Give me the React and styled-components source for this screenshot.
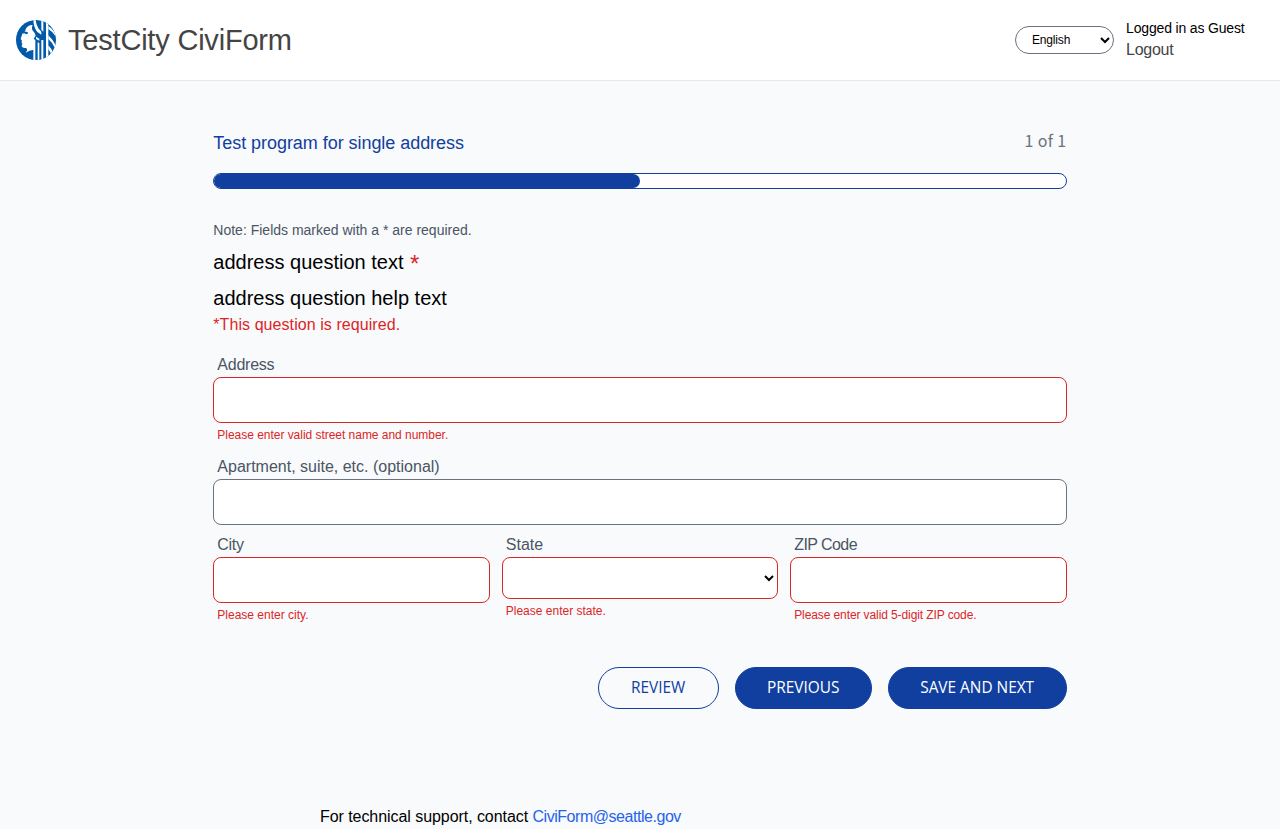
import React from 'react';
import styled, { createGlobalStyle, css } from 'styled-components';

const blue = '#113f9f';
const red = '#dc2626';

const GlobalStyle = createGlobalStyle`
  *, *::before, *::after { box-sizing: border-box; }
  body {
    margin: 0;
    background: #f8fafc;
    color: #000;
    font: 16px/24px "Liberation Sans", sans-serif;
  }
  h1, h2, p { margin: 0; font-weight: 400; }
  a { text-decoration: none; }
`;

const Page = styled.div`
  height: 829px;
  overflow: hidden;
`;

const Header = styled.header`
  display: flex;
  align-items: center;
  height: 81px;
  padding: 0 16px;
  background: #fff;
  border-bottom: 1px solid #e5e7eb;
`;

const Brand = styled.a`
  display: flex;
  align-items: center;
  gap: 12px;
`;

const BrandName = styled.span`
  font-size: 29px;
  line-height: 36px;
  letter-spacing: -0.2px;
  color: #444;
`;

const Logo = styled.svg`
  display: block;
  width: 40px;
  height: 40px;
`;

const LanguageSelect = styled.select`
  width: 99px;
  height: 28px;
  margin-left: auto;
  padding: 0 0 0 12px;
  border: 1px solid #6b7280;
  border-radius: 14px;
  background: #fff;
  color: #000;
  font: 12px/16px "Liberation Sans", sans-serif;
  letter-spacing: -0.17px;
`;

const Account = styled.div`
  display: flex;
  flex-direction: column;
  width: 150px;
  padding-left: 12px;
  padding-bottom: 1px;
  white-space: nowrap;
`;

const UserName = styled.span`
  font-size: 14px;
  line-height: 20px;
  letter-spacing: -0.16px;
`;

const Logout = styled.a`
  letter-spacing: -0.25px;
  color: #444;
`;

const Main = styled.main`
  width: 66.6667%;
  margin: 48px auto 0;
`;

const ProgramBar = styled.div`
  display: flex;
  justify-content: space-between;
  height: 28px;
`;

const ProgramTitle = styled.h2`
  font-size: 18px;
  line-height: 28px;
  letter-spacing: -0.05px;
  color: ${blue};
`;

const StepCount = styled.span`
  font: 16px/22px "Noto Sans CJK SC", "Noto Sans", sans-serif;
  letter-spacing: 0.4px;
  color: #6b7280;
`;

const Track = styled.div`
  height: 16px;
  margin-top: 16px;
  border: 1px solid ${blue};
  border-radius: 8px;
  background: #fff;
`;

const Progress = styled.div`
  width: 50%;
  height: 14px;
  border-radius: 7px;
  background: ${blue};
`;

const Note = styled.p`
  margin-top: 31px;
  font-size: 14px;
  line-height: 20px;
  color: #4b5563;
`;

const Question = styled.p`
  margin-top: 8px;
  font-size: 20px;
  line-height: 28px;
`;

const Star = styled.span`
  margin-left: 1px;
  font-size: 24px;
  line-height: 20px;
  vertical-align: -3px;
  color: ${red};
`;

const QuestionError = styled.p`
  margin-top: 1px;
  letter-spacing: 0.07px;
  color: ${red};
`;

const Form = styled.form`
  margin-top: 16px;
`;

const Field = styled.div`
  display: flex;
  flex-direction: column;
  margin-bottom: ${(p) => p.$gap || 0}px;
`;

const Label = styled.label`
  padding-left: 4px;
  letter-spacing: ${(p) => p.$tracking || 0}px;
  color: #4b5563;
`;

const control = css`
  width: 100%;
  border: 1px solid ${(p) => (p.$invalid ? red : '#6b7280')};
  border-radius: 8px;
  background: #fff;
  font: 16px/24px "Liberation Sans", sans-serif;
`;

const Input = styled.input`
  ${control}
  height: 46px;
  padding: 0 12px;
`;

const Select = styled.select`
  ${control}
  height: 42px;
`;

const FieldError = styled.p`
  margin-top: 4px;
  padding-left: 4px;
  font-size: 12px;
  line-height: 16px;
  letter-spacing: ${(p) => p.$tracking || 0}px;
  color: ${red};
`;

const Row = styled.div`
  display: grid;
  grid-template-columns: repeat(3, minmax(0, 1fr));
  gap: 12px;
`;

const Actions = styled.div`
  display: flex;
  justify-content: flex-end;
  gap: 16px;
  margin-top: 44px;
`;

const Button = styled.button`
  width: ${(p) => p.$width}px;
  height: 42px;
  padding: 0;
  border: 1px solid ${blue};
  border-radius: 21px;
  background: ${(p) => (p.$outline ? 'transparent' : blue)};
  color: ${(p) => (p.$outline ? blue : '#fff')};
  font: 15.4px/24px "Open Sans", sans-serif;
  text-transform: uppercase;
`;

const Footer = styled.footer`
  width: 50%;
  margin: 96px auto 0;
  letter-spacing: -0.06px;
`;

const Email = styled.a`
  letter-spacing: -0.46px;
  color: #2563eb;
`;

function CityLogo() {
  return (
    <Logo viewBox="0 0 120 120" aria-hidden="true">
      <clipPath id="seal"><circle cx="60" cy="60" r="60" /></clipPath>
      <g clipPath="url(#seal)">
        <rect width="120" height="120" fill="#0059a9" />
        <g fill="#fff">
          <path d="M50 15C39 15 30 21 28 32L19 41L14 57L18 62L16 67L19 70L17 78Q18 85 29 84L33 86Q35 91 29 98Q43 89 52 90V120H58V60L53 56L59 47Q57 38 51 33Q45 26 50 15Z" />
          <path d="M52 0H59Q60 14 67 25L76 35V44L64 36Q53 23 52 0Z" />
          <path d="M65 66L70 70V120H65ZM76 60H82V120H76ZM76 0H82V35L76 29ZM60 50L70 56V62L60 57ZM90 0H97V120H90Z" />
          <path d="M97 18Q108 25 118 40L120 50Q109 34 97 27ZM97 46Q110 58 120 77L117 85Q109 67 97 57ZM97 76Q107 87 112 98L106 105Q102 94 97 88Z" />
        </g>
        <path fill="#0059a9" d="M22 34L34 36L37 40L30 43L26 40L21 41Z" />
      </g>
    </Logo>
  );
}

export default function App() {
  return (
    <Page>
      <GlobalStyle />
      <Header>
        <Brand>
          <CityLogo />
          <BrandName>TestCity CiviForm</BrandName>
        </Brand>
        <LanguageSelect aria-label="Language" defaultValue="en">
          <option value="en">English</option>
        </LanguageSelect>
        <Account>
          <UserName>Logged in as Guest</UserName>
          <Logout>Logout</Logout>
        </Account>
      </Header>

      <Main>
        <ProgramBar>
          <ProgramTitle>Test program for single address</ProgramTitle>
          <StepCount>1 of 1</StepCount>
        </ProgramBar>
        <Track><Progress /></Track>

        <Note>Note: Fields marked with a * are required.</Note>
        <Question>address question text <Star>*</Star></Question>
        <Question>address question help text</Question>
        <QuestionError>*This question is required.</QuestionError>

        <Form>
          <Field $gap={12}>
            <Label htmlFor="street" $tracking={-0.25}>Address</Label>
            <Input id="street" $invalid />
            <FieldError $tracking={-0.03}>Please enter valid street name and number.</FieldError>
          </Field>
          <Field $gap={8}>
            <Label htmlFor="unit">Apartment, suite, etc. (optional)</Label>
            <Input id="unit" />
          </Field>
          <Row>
            <Field>
              <Label htmlFor="city" $tracking={-0.3}>City</Label>
              <Input id="city" $invalid />
              <FieldError>Please enter city.</FieldError>
            </Field>
            <Field>
              <Label htmlFor="state">State</Label>
              <Select id="state" $invalid><option /></Select>
              <FieldError>Please enter state.</FieldError>
            </Field>
            <Field>
              <Label htmlFor="zip" $tracking={-0.56}>ZIP Code</Label>
              <Input id="zip" $invalid />
              <FieldError $tracking={-0.1}>Please enter valid 5-digit ZIP code.</FieldError>
            </Field>
          </Row>
          <Actions>
            <Button type="button" $outline $width={121}>Review</Button>
            <Button type="button" $width={137}>Previous</Button>
            <Button type="button" $width={179}>Save and next</Button>
          </Actions>
        </Form>
      </Main>

      <Footer>
        For technical support, contact <Email>CiviForm@seattle.gov</Email>
      </Footer>
    </Page>
  );
}
